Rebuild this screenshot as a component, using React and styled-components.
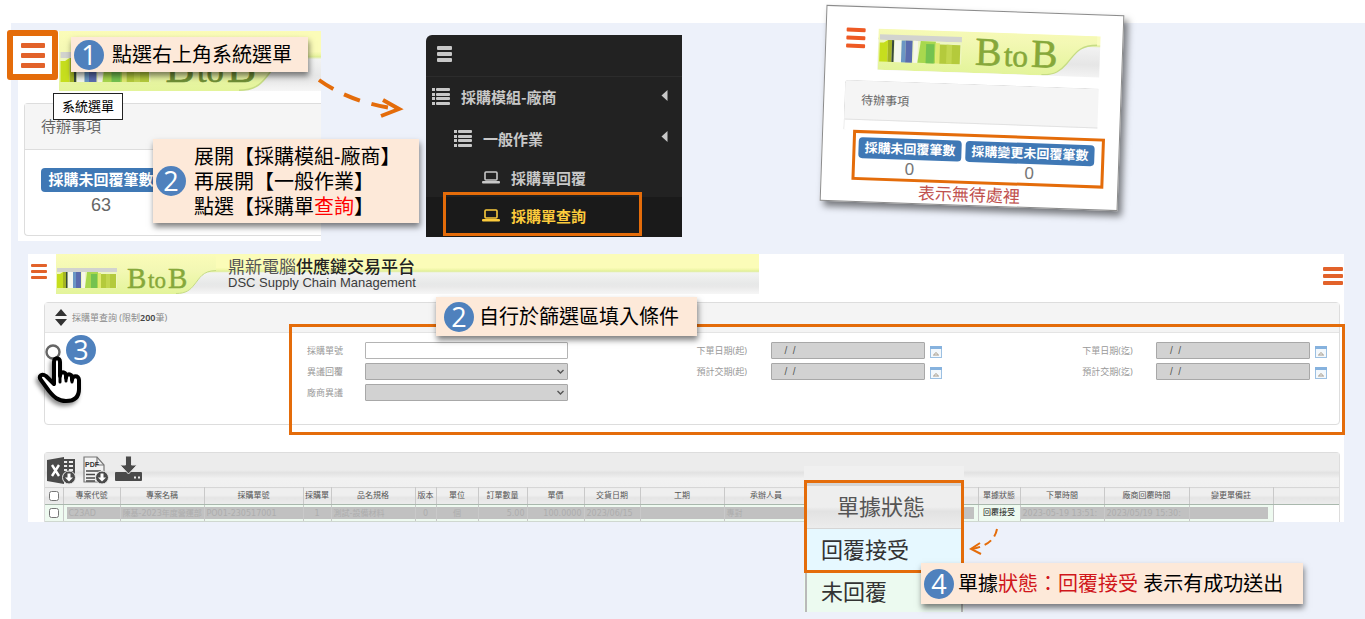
import React from "react";
import styled, { createGlobalStyle } from "styled-components";

const ORANGE = "#e46c0a";

const GlobalStyle = createGlobalStyle`
  *, *::before, *::after { box-sizing: border-box; }
  body {
    margin: 0;
    background: #fff;
    color: #000;
    font-family: "Noto Sans", "Noto Sans CJK TC", sans-serif;
  }
  button { border: 0; padding: 0; background: none; cursor: pointer; font: inherit; }
  h2, p, ul { margin: 0; padding: 0; font-weight: inherit; font-size: inherit; }
  ul { list-style: none; }
`;

const Page = styled.main`
  min-height: 100vh;
  padding: 23px 0 0 11px;
  overflow: hidden;
  display: flex;
`;

const Slide = styled.div`
  flex: 1;
  min-width: 0;
  background: #edf1fa;
  padding: 8px 21px 0 7px;
`;

const TopRow = styled.div`
  display: flex;
  align-items: flex-start;
`;

/* ---------- shared pieces ---------- */

const Callout = styled.div`
  position: absolute;
  z-index: 3;
  display: flex;
  align-items: center;
  gap: ${(p) => p.$gap || 8}px;
  padding: ${(p) => p.$pad || "0 3px"};
  height: ${(p) => p.$height}px;
  left: ${(p) => p.$left}px;
  top: ${(p) => p.$top}px;
  width: ${(p) => p.$width}px;
  background: #fde9d9;
  box-shadow: 1px 4px 6px rgba(0, 0, 0, 0.5);
  font-size: 20px;
  line-height: 25px;
  white-space: nowrap;
`;

const Badge = styled.span`
  flex: none;
  width: 30px;
  height: 30px;
  border-radius: 50%;
  background: #4f81bd;
  color: #fff;
  font-family: "Open Sans", sans-serif;
  font-size: 27px;
  line-height: 29px;
  text-align: center;
`;

const Red = styled.span`
  color: ${(p) => (p.$deep ? "#d0161b" : "#ff0000")};
`;

const MenuButton = styled.button`
  flex: none;
  display: flex;
  flex-direction: column;
  gap: ${(p) => p.$gap}px;
  width: ${(p) => p.$w}px;
  span {
    height: ${(p) => p.$bar}px;
    background: ${(p) => p.$color || "#e2622a"};
    border-radius: 1px;
  }
`;

const Burger = ({ label, ...rest }) => (
  <MenuButton type="button" aria-label={label} {...rest}>
    <span /><span /><span />
  </MenuButton>
);

const BannerBox = styled.div`
  flex: 0 1 ${(p) => p.$width}px;
  min-width: 0;
  height: ${(p) => p.$height}px;
  overflow: hidden;
  display: flex;
  background: ${(p) =>
    p.$cropped
      ? "linear-gradient(#fafcc0 0 20%, #e0ee9c 24%, #f2f2f2 28%, #e6e6e6 70%, #f3f3f3)"
      : "linear-gradient(#fbfcb8 0 34%, #eef6a6 40%, #dfee96 43%, #f2f3f2 47%, #e7e8e8 75%, #e9e9e9 82%, #f6f6f6)"};
`;

function Logo({ height, top = 0, green = "#86a83a" }) {
  const h = 40 - top;
  const width = Math.round((160 * height) / h);
  return (
    <svg width={width} height={height} viewBox={`0 ${top} 160 ${h}`} style={{ flex: "none" }} role="img" aria-label="BtoB">
      <defs>
        <linearGradient id="leaf" x1="0" y1="0" x2="0" y2="1">
          <stop offset="0" stopColor="#fbfcb8" />
          <stop offset="0.4" stopColor="#f3f8b4" />
          <stop offset="1" stopColor="#e3f49a" />
        </linearGradient>
      </defs>
      <path d="M0 0H160V16C146 17 144 24 138 31C134 36 130 39 120 40H0Z" fill="url(#leaf)" />
      <path d="M160 16.5C146 17 144 24 138 31C134 36 130 39.500 120 39.500" fill="none" stroke="#c6dc84" strokeWidth="1" />
      <rect x="1" y="14" width="60" height="4" fill="#d2d3cf" />
      <rect x="1" y="18" width="60" height="16" fill="#eef6c0" />
      <path d="M1 20h3l3-2v16H1z" fill="#c6de1e" />
      <rect x="7" y="18" width="3" height="16" fill="#a3b424" />
      <rect x="10" y="18" width="1.500" height="16" fill="#364a3a" />
      <rect x="12" y="18" width="5" height="16" fill="#f3f7ee" />
      <rect x="17" y="18" width="3" height="16" fill="#6a96c4" />
      <rect x="20" y="18" width="5" height="16" fill="#5a6cae" />
      <rect x="26" y="18" width="3" height="16" fill="#f6f6ea" />
      <path d="M31 18h11v16H29z" fill="#a8d84e" />
      <rect x="35" y="20" width="6" height="14" fill="#74c250" />
      <rect x="42" y="19" width="3" height="15" fill="#e0ea70" />
      <rect x="45" y="20" width="15" height="14" fill="#b4ca3c" />
      <rect x="50" y="20" width="4" height="14" fill="#c2d64e" />
      <text x="71" y="34" fontFamily="Liberation Serif, serif" fill={green} stroke={green} strokeWidth="0.400" fontSize="29">
        B<tspan x="92" fontSize="23">to</tspan><tspan x="112">B</tspan>
      </text>
    </svg>
  );
}

/* ---------- to-do shot, top left ---------- */

const TodoShot = styled.section`
  position: relative;
  flex: 0 1 303px;
  height: 210px;
  background: #fff;
  padding-left: 6px;
`;

const TodoBannerRow = styled.div`
  padding-left: 35px;
  display: flex;
`;

const TodoPanel = styled.div`
  margin-top: 12px;
  height: 133px;
  border: 1px solid #ddd;
  border-right: 0;
  border-radius: 4px 0 0 4px;
`;

const TodoHead = styled.h2`
  height: 46px;
  padding-left: 16px;
  border-bottom: 1px solid #ddd;
  background: #f5f5f5;
  color: #666;
  font-size: 15px;
  line-height: 45px;
`;

const TodoCount = styled.div`
  width: 120px;
  margin: 18px 0 0 16px;
  text-align: center;
  color: #666;
  font-family: "Liberation Sans", sans-serif;
  font-size: 18px;
  line-height: 26px;
`;

const Pill = styled.div`
  border-radius: 4px;
  background: #3f78b5;
  color: #fff;
  font-family: "Noto Sans CJK TC", sans-serif;
  font-weight: 700;
  white-space: nowrap;
  text-align: center;
  font-size: ${(p) => p.$size}px;
  height: ${(p) => p.$height}px;
  line-height: ${(p) => p.$height - 2}px;
  padding: 0 6px;
`;

const MenuFrame = styled.div`
  position: absolute;
  left: -11px;
  top: -1px;
  z-index: 4;
  width: 51px;
  height: 50px;
  display: flex;
  align-items: center;
  justify-content: center;
  background: #fff;
  border: 6px solid ${ORANGE};
  border-radius: 3px;
`;

const Tooltip = styled.div`
  position: absolute;
  left: 35px;
  top: 62px;
  z-index: 2;
  width: 70px;
  height: 27px;
  border: 1px solid #222;
  background: #fff;
  font-size: 13px;
  line-height: 24px;
  text-align: center;
`;

const Arrow = styled.svg`
  position: absolute;
  z-index: 2;
  left: ${(p) => p.$left}px;
  top: ${(p) => p.$top}px;
  fill: none;
  stroke: ${ORANGE};
`;

/* ---------- dark system menu ---------- */

const SideMenu = styled.nav`
  position: relative;
  flex: 0 1 256px;
  margin: 4px 0 0 105px;
  background: #222;
  border-top-left-radius: 6px;
  color: #c8c8c8;
`;

const SideTop = styled.div`
  height: 42px;
  padding: 11px 0 0 11px;
  border-bottom: 1px solid #2c2c2c;
`;

const SideLink = styled.a`
  display: flex;
  align-items: center;
  gap: 11px;
  height: ${(p) => p.$height}px;
  padding: 0 14px 3px ${(p) => p.$indent}px;
  background: ${(p) => (p.$active ? "#1a1a1a" : "transparent")};
  color: ${(p) => (p.$active ? "#fccb3c" : "#c8c8c8")};
  font-family: "Noto Sans CJK TC", sans-serif;
  font-size: 15px;
  font-weight: 700;
  text-decoration: none;
  white-space: nowrap;
  svg { flex: none; }
  svg:last-child:not(:first-child) { margin: -3px 0 0 auto; }
`;

const ActiveFrame = styled.div`
  position: absolute;
  left: 17px;
  top: 157px;
  width: 199px;
  height: 44px;
  border: 3px solid ${ORANGE};
`;

const ListIcon = () => (
  <svg width="18" height="17" viewBox="0 0 18 17" fill="currentColor">
    {[0, 5, 9, 14].map((y) => (
      <React.Fragment key={y}>
        <rect x="0" y={y} width="3" height="3" />
        <rect x="4" y={y} width="14" height="3" rx="1" />
      </React.Fragment>
    ))}
  </svg>
);

const LaptopIcon = () => (
  <svg width="18" height="13" viewBox="0 0 18 13">
    <rect x="3" y="1" width="12" height="8" rx="1" fill="none" stroke="currentColor" strokeWidth="1.600" />
    <rect x="0" y="10" width="18" height="2.400" rx="1" fill="currentColor" />
  </svg>
);

const CaretIcon = () => (
  <svg width="7" height="11" viewBox="0 0 7 11"><path d="M6.500 0V11L0.500 5.500Z" fill="currentColor" /></svg>
);

/* ---------- tilted photo card ---------- */

const PhotoCard = styled.section`
  flex: 0 1 297px;
  margin: -21px 0 -16px 141px;
  height: 196px;
  padding: 21px 14px 0 20px;
  background: #fff;
  border: 1px solid #8c8c8c;
  box-shadow: 4px 5px 7px rgba(0, 0, 0, 0.5);
  transform: rotate(2deg);
`;

const PhotoTop = styled.div`
  display: flex;
  align-items: flex-start;
  gap: 13px;
`;

const PhotoPanel = styled.div`
  margin: 11px 8px 0 0;
  height: 50px;
  border: 1px solid #e2e2e2;
  border-width: 1px 0 0 1px;
  border-top-left-radius: 4px;
`;

const PhotoHead = styled.h2`
  height: 39px;
  padding-left: 16px;
  background: #f5f5f5;
  border-bottom: 1px solid #e2e2e2;
  color: #666;
  font-size: 12px;
  line-height: 38px;
`;

const CountFrame = styled.div`
  display: flex;
  gap: 4px;
  margin-left: 10px;
  width: 252px;
  height: 50px;
  padding: 4px 3px 0;
  border: 3px solid ${ORANGE};
  color: #777;
  font-family: "Liberation Sans", sans-serif;
  font-size: 17px;
  line-height: 19px;
  text-align: center;
`;

const PhotoNote = styled.p`
  padding-right: 6px;
  color: #c0504d;
  font-size: 17px;
  line-height: 22px;
  text-align: center;
`;

/* ---------- workspace ---------- */

const Workspace = styled.section`
  margin: 13px 0 0 10px;
  background: #fff;
`;

const WorkHead = styled.header`
  display: flex;
  align-items: flex-start;
  padding: 0 1px 0 3px;
  > button:first-child { margin: 10px 9px 0 0; }
  > button:last-child { margin: 13px 0 0 auto; }
`;

const Titles = styled.div`
  padding: 5px 0 0 12px;
  color: #3c3c3c;
  white-space: nowrap;
  font-family: "Liberation Sans", "Noto Sans CJK TC", sans-serif;
  font-size: 13px;
  line-height: 14px;
  h2 {
    font-size: 17px;
    line-height: 17px;
    color: #555;
  }
  strong { color: #222; font-weight: 500; }
`;

const Panel = styled.section`
  position: relative;
  margin: ${(p) => p.$top}px 4px 0 16px;
  border: 1px solid #ddd;
  border-radius: 4px 4px ${(p) => (p.$open ? "0 0" : "4px 4px")};
  border-bottom-width: ${(p) => (p.$open ? 0 : 1)}px;
`;

const PanelHead = styled.h2`
  display: flex;
  align-items: center;
  gap: 5px;
  height: 30px;
  padding: 0 0 0 10px;
  background: #f4f4f4;
  border-bottom: 1px solid #e4e4e4;
  color: #8a8a8a;
  font-size: 9px;
  b { color: #444; font-weight: 600; }
`;

const FilterBody = styled.div`
  display: flex;
  height: 91px;
`;

const Actions = styled.div`
  position: relative;
  flex: none;
  width: 262px;
  padding-top: 11px;
  button { display: flex; }
`;

const StepThree = styled(Badge)`
  position: absolute;
  left: 21px;
  top: 2px;
`;

const Hand = styled.svg`
  position: absolute;
  left: -8px;
  top: 19px;
  filter: drop-shadow(-2px 3px 2px rgba(0, 0, 0, 0.45));
`;

const Fields = styled.form`
  flex: 1;
  display: grid;
  grid-template-columns: 390fr 386fr 257fr;
  padding-top: 9px;
`;

const FieldColumn = styled.div`
  display: flex;
  flex-direction: column;
  gap: 4px;
`;

const Field = styled.div`
  display: flex;
  align-items: center;
  height: 17px;
  label {
    flex: none;
    width: ${(p) => p.$label}px;
    color: #999;
    font-size: 9px;
    line-height: 16px;
  }
  button { margin: 2px 0 0 5px; display: flex; }
`;

const controlLook = `
  height: 17px;
  margin: 0;
  border-radius: 1px;
  font-family: "Liberation Sans", sans-serif;
  font-size: 10px;
`;

const TextInput = styled.input`
  ${controlLook}
  width: ${(p) => p.$width}px;
  padding: 0 10px;
  border: 1px solid ${(p) => (p.$off ? "#a8a8a8" : "#b4b4b4")};
  background: ${(p) => (p.$off ? "#d2d2d2" : "#fff")};
  color: #555;
`;

const SelectWrap = styled.div`
  position: relative;
  display: flex;
  svg { position: absolute; right: 4px; top: 6px; pointer-events: none; }
`;

const Select = styled.select`
  ${controlLook}
  width: 203px;
  appearance: none;
  border: 1px solid #a8a8a8;
  background: #d2d2d2;
  opacity: 1;
`;

const FilterFrame = styled.div`
  position: absolute;
  left: 244px;
  right: -6px;
  top: 21px;
  bottom: -11px;
  border: 3px solid ${ORANGE};
  pointer-events: none;
`;

/* ---------- result grid ---------- */

const Toolbar = styled.div`
  display: flex;
  align-items: flex-start;
  gap: 6px;
  height: 34px;
  padding: 3px 0 0 2px;
  background: linear-gradient(#ececec 0 50%, #e2e2e2 58%, #f1f1f1 75%, #f0f0f0);
  button { display: flex; }
`;

const Grid = styled.table`
  width: 100%;
  table-layout: fixed;
  border-collapse: collapse;
  font-family: "DejaVu Sans", "Noto Sans CJK TC", sans-serif;
  font-size: 8px;
  line-height: 14px;
  white-space: nowrap;
  th, td { overflow: hidden; padding: 0; border-right: 1px solid #c9c9c9; }
  th:last-child, td:last-child { border-right: 0; }
  input { display: block; margin: 0 auto; width: 10px; height: 10px; }
  th {
    height: 17px;
    background: linear-gradient(#efefef 0 45%, #e4e4e4 55%, #ececec);
    border-top: 1px solid #d6d6d6;
    border-bottom: 1px solid #a9b8ad;
    color: #555;
    font-weight: 400;
    text-align: center;
  }
  td { height: 17px; border-bottom: 1px solid #cfd8d0; background: #eefaf0; }
  td:last-child { background: #fff; border-bottom-color: #fff; }
`;

const Masked = styled.div`
  height: 12px;
  margin: 0 ${(p) => p.$end || 0}px 0 ${(p) => p.$start || 0}px;
  padding: 0 2px;
  overflow: hidden;
  background: #c1c1c1;
  color: #adadad;
  line-height: 13px;
  text-align: ${(p) => p.$align || "left"};
`;

const Status = styled.div`
  color: #222;
  line-height: 12px;
  text-align: center;
`;

const Zoomed = styled.div`
  position: absolute;
  z-index: 2;
  left: 759px;
  top: 13px;
  width: 160px;
  padding: 14px 1px 0;
  background: linear-gradient(#f0f0f0 0 20px, #edfaf0 20px);
`;

const ZoomCell = styled.div`
  height: ${(p) => p.$height || 42}px;
  padding: 0 ${(p) => (p.$head ? 6 : 0)}px 0 ${(p) => (p.$head ? 0 : 14)}px;
  border: solid #b9b9b9;
  border-width: 0 2px;
  border-top: ${(p) => (p.$head ? 6 : 1)}px solid #d5d5d5;
  background: ${(p) => p.$fill};
  color: ${(p) => (p.$head ? "#555" : "#333")};
  font-size: 22px;
  line-height: 41px;
  text-align: ${(p) => (p.$head ? "center" : "left")};
`;

const ZoomFrame = styled.div`
  position: absolute;
  left: 0;
  top: 14px;
  width: 160px;
  height: 93px;
  border: 3px solid ${ORANGE};
`;

const CalendarIcon = () => (
  <svg width="12" height="12" viewBox="0 0 12 12">
    <rect x="0.500" y="0.500" width="11" height="11" fill="#f3f8fc" stroke="#9cc0e2" />
    <rect x="0" y="0" width="12" height="3" fill="#86b2de" />
    <path d="M3 9h6M6 6v2M4 8h1M7 8h1" stroke="#a59a8a" strokeWidth="1" />
  </svg>
);

const ExcelIcon = () => (
  <svg width="29" height="29" viewBox="0 0 29 29">
    <path d="M15 4h12v20H15z" fill="none" stroke="#4a4a4a" strokeWidth="2" />
    <path d="M16 8h11M16 12h11M16 16h11M21 4v18" stroke="#4a4a4a" strokeWidth="1.800" />
    <path d="M0 4L17 1V28L0 25Z" fill="#4a4a4a" />
    <path d="M5 9l7 11M12 9L5 20" stroke="#fff" strokeWidth="2.400" />
    <circle cx="22" cy="21.500" r="6.500" fill="#4a4a4a" stroke="#e8e8e8" />
    <path d="M20.500 17.500h3v4h2.500l-4 4-4-4h2.500z" fill="#fff" />
  </svg>
);

const PdfIcon = () => (
  <svg width="27" height="29" viewBox="0 0 27 29">
    <path d="M2 1h13l7 8v17H2z" fill="#f3f3f3" stroke="#777" strokeWidth="1.200" />
    <path d="M15 1v8h7" fill="none" stroke="#777" strokeWidth="1.200" />
    <text x="3" y="11" fontSize="7" fontWeight="700" fontFamily="Liberation Sans, sans-serif" fill="#333">PDF</text>
    <path d="M4 15h15M4 18.500h9M4 22h9M4 25h9" stroke="#4a4a4a" strokeWidth="1.600" />
    <circle cx="20" cy="21.500" r="6.500" fill="#4a4a4a" stroke="#e8e8e8" />
    <path d="M18.500 17.500h3v4h2.500l-4 4-4-4h2.500z" fill="#fff" />
  </svg>
);

const DownloadIcon = () => (
  <svg width="27" height="26" viewBox="0 0 27 26">
    <path d="M1 16h25q1 0 1 1v7q0 1-1 1H1q-1 0-1-1v-7q0-1 1-1z" fill="#4a4a4a" />
    <path d="M10.500 0h6v9h5.500L13.500 18 5 9h5.500z" fill="#4a4a4a" stroke="#e6e6e6" strokeWidth="1" />
    <path d="M19 21.500h2M23 21.500h2" stroke="#eee" strokeWidth="2" />
  </svg>
);

const COLUMNS = [
  { w: 57, name: "專案代號", text: "C23AD", start: 3 },
  { w: 84, name: "專案名稱", text: "陳基-2023年度營運部" },
  { w: 99, name: "採購單號", text: "PO01-230517001" },
  { w: 28, name: "採購單", text: "1", align: "center" },
  { w: 84, name: "品名規格", text: "測試-設備材料" },
  { w: 21, name: "版本", text: "0", align: "center" },
  { w: 42, name: "單位", text: "個", align: "center" },
  { w: 49, name: "訂單數量", text: "5.00", align: "right" },
  { w: 57, name: "單價", text: "100.0000", align: "right" },
  { w: 56, name: "交貨日期", text: "2023/06/15" },
  { w: 84, name: "工期", text: "" },
  { w: 84, name: "承辦人員", text: "專對" },
  { w: 170, name: "", text: "", end: 4 },
  { w: 42, name: "單據狀態", status: "回覆接受" },
  { w: 84, name: "下單時間", text: "2023-05-19 13:51:" },
  { w: 85, name: "廠商回覆時間", text: "2023/05/19 15:30:" },
  { w: 84, name: "變更單備註", text: "", end: 5 },
];

const Chevron = () => (
  <svg width="7" height="5" viewBox="0 0 7 5"><path d="M0.500 1L3.500 4L6.500 1" fill="none" stroke="#555" strokeWidth="1.400" /></svg>
);

function SelectField({ id, label }) {
  return (
    <Field $label={58}>
      <label htmlFor={id}>{label}</label>
      <SelectWrap><Select id={id} disabled /><Chevron /></SelectWrap>
    </Field>
  );
}

function DateField({ id, label }) {
  return (
    <Field $label={74}>
      <label htmlFor={id}>{label}</label>
      <TextInput id={id} $off $width={154} defaultValue=" /  /" />
      <button type="button" aria-label={label}><CalendarIcon /></button>
    </Field>
  );
}

export default function App() {
  return (
    <Page>
      <GlobalStyle />
      <Slide>
        <TopRow>
          <TodoShot>
            <TodoBannerRow>
              <BannerBox $width={262} $height={60}><Logo height={60} green="#6f8f35" /></BannerBox>
            </TodoBannerRow>
            <TodoPanel>
              <TodoHead>待辦事項</TodoHead>
              <TodoCount>
                <Pill $size={15} $height={24}>採購未回覆筆數</Pill>
                63
              </TodoCount>
            </TodoPanel>
            <MenuFrame><Burger label="系統選單" $w={24} $bar={5} $gap={5} /></MenuFrame>
            <Tooltip role="tooltip">系統選單</Tooltip>
            <Callout $left={53} $top={6} $width={237} $height={35}>
              <Badge>1</Badge>
              <span>點選右上角系統選單</span>
            </Callout>
            <Callout $left={135} $top={108} $width={266} $height={84}>
              <Badge>2</Badge>
              <span>
                展開【採購模組-廠商】<br />
                再展開【一般作業】<br />
                點選【採購單<Red>查詢</Red>】
              </span>
            </Callout>
            <Arrow $left={298} $top={44} width="90" height="46" viewBox="0 0 90 46" strokeWidth="4">
              <path d="M3 5Q35 28 82 34" strokeDasharray="17 12" />
              <path d="M67 25L83 34L65 41" />
            </Arrow>
          </TodoShot>

          <SideMenu aria-label="系統選單">
            <SideTop><Burger label="選單" $w={15} $bar={4} $gap={2} $color="#c8c8c8" /></SideTop>
            <SideLink href="#module" $indent={6} $height={42}><ListIcon />採購模組-廠商<CaretIcon /></SideLink>
            <SideLink href="#general" $indent={28} $height={41}><ListIcon />一般作業<CaretIcon /></SideLink>
            <SideLink href="#reply" $indent={56} $height={37}><LaptopIcon /><span>採購單回覆</span></SideLink>
            <SideLink href="#query" $indent={56} $height={40} $active><LaptopIcon /><span>採購單查詢</span></SideLink>
            <ActiveFrame />
          </SideMenu>

          <PhotoCard>
            <PhotoTop>
              <Burger label="系統選單" $w={19} $bar={4} $gap={4} $color="#ee5a24" />
              <BannerBox $width={222} $height={41} $cropped><Logo height={41} top={10} /></BannerBox>
            </PhotoTop>
            <PhotoPanel><PhotoHead>待辦事項</PhotoHead></PhotoPanel>
            <CountFrame>
              <div><Pill $size={13} $height={21}>採購未回覆筆數</Pill>0</div>
              <div><Pill $size={13} $height={21}>採購變更未回覆筆數</Pill>0</div>
            </CountFrame>
            <PhotoNote>表示無待處裡</PhotoNote>
          </PhotoCard>
        </TopRow>

        <Workspace>
          <WorkHead>
            <Burger label="系統選單" $w={16} $bar={3} $gap={3} />
            <BannerBox $width={703} $height={40}>
              <Logo height={40} />
              <Titles>
                <h2>鼎新電腦<strong>供應鏈交易平台</strong></h2>
                <p>DSC Supply Chain Management</p>
              </Titles>
            </BannerBox>
            <Burger label="功能選單" $w={20} $bar={4} $gap={3} />
          </WorkHead>

          <Panel $top={8}>
            <PanelHead>
              <svg width="12" height="17" viewBox="0 0 12 17" fill="#333"><path d="M6 0L12 7H0ZM0 10H12L6 17Z" /></svg>
              <span>採購單查詢 (限制<b>200</b>筆)</span>
            </PanelHead>
            <FilterBody>
              <Actions>
                <button type="button" aria-label="查詢">
                  <svg width="16" height="16" viewBox="0 0 16 16"><circle cx="8" cy="8" r="6.500" fill="#fff" stroke="#666" strokeWidth="2.400" /></svg>
                </button>
                <StepThree>3</StepThree>
                <Hand width="48" height="54" viewBox="0 0 48 54">
                  <path
                    d="M17 32V10C17 5 23 5 23 10V24C23 19 29 19 29 24V26C29 21 35 21 35 26V28C35 23 42 23 42 28V37C42 45 38 49 29 49C21 49 17 45 12 39L4 28C1 24 5 21 9 24Z"
                    fill="#fff" stroke="#000" strokeWidth="4" strokeLinejoin="round"
                  />
                  <path d="M23 22V30M29 23V29M35 25V30" stroke="#000" strokeWidth="3" strokeLinecap="round" />
                </Hand>
              </Actions>
              <Fields onSubmit={(e) => e.preventDefault()}>
                <FieldColumn>
                  <Field $label={58}>
                    <label htmlFor="po">採購單號</label>
                    <TextInput id="po" $width={203} />
                  </Field>
                  <SelectField id="reply" label="異議回覆" />
                  <SelectField id="vendor" label="廠商異議" />
                </FieldColumn>
                <FieldColumn>
                  <DateField id="order-from" label="下單日期(起)" />
                  <DateField id="due-from" label="預計交期(起)" />
                </FieldColumn>
                <FieldColumn>
                  <DateField id="order-to" label="下單日期(迄)" />
                  <DateField id="due-to" label="預計交期(迄)" />
                </FieldColumn>
              </Fields>
            </FilterBody>
            <FilterFrame />
            <Callout $left={391} $top={-6} $width={261} $height={39} $gap={5} $pad="0 8px">
              <Badge>2</Badge>
              <span>自行於篩選區填入條件</span>
            </Callout>
          </Panel>

          <Panel $top={27} $open>
            <Toolbar>
              <button type="button" aria-label="Excel"><ExcelIcon /></button>
              <button type="button" aria-label="PDF"><PdfIcon /></button>
              <button type="button" aria-label="下載"><DownloadIcon /></button>
            </Toolbar>
            <Grid>
              <colgroup>
                <col width="18" />
                {COLUMNS.map((c, i) => <col key={i} width={c.w} />)}
                <col />
              </colgroup>
              <thead>
                <tr>
                  <th><input type="checkbox" aria-label="全選" /></th>
                  {COLUMNS.map((c, i) => <th key={i}>{c.name}</th>)}
                  <th />
                </tr>
              </thead>
              <tbody>
                <tr>
                  <td><input type="checkbox" aria-label="選取" /></td>
                  {COLUMNS.map((c, i) => (
                    <td key={i}>
                      {c.status
                        ? <Status>{c.status}</Status>
                        : <Masked $align={c.align} $start={c.start} $end={c.end}>{c.text}</Masked>}
                    </td>
                  ))}
                  <td />
                </tr>
              </tbody>
            </Grid>
            <Zoomed>
              <ZoomCell $head $height={48} $fill="linear-gradient(#eeeeee 0 50%, #e2e2e2 60%, #ececec)">單據狀態</ZoomCell>
              <ZoomCell $fill="#e6f8ff">回覆接受</ZoomCell>
              <ZoomCell $fill="#ecfaf0">未回覆</ZoomCell>
              <ZoomFrame />
            </Zoomed>
            <Arrow $left={923} $top={74} width="34" height="34" viewBox="0 0 34 34" strokeWidth="2">
              <path d="M29 2Q26 18 4 22" strokeDasharray="8 5" />
              <path d="M12 16L3 22L13 27" />
            </Arrow>
            <Callout $left={876} $top={110} $width={382} $height={41} $gap={4}>
              <Badge>4</Badge>
              <span>單據<Red $deep>狀態：回覆接受</Red> 表示有成功送出</span>
            </Callout>
          </Panel>
        </Workspace>
      </Slide>
    </Page>
  );
}
